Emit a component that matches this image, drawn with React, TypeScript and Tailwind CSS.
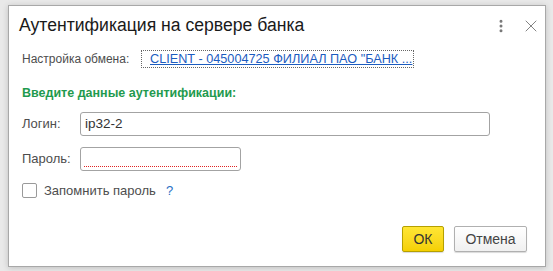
import { MoreVertical, X } from 'lucide-react';

export default function App() {
  return (
    <div className="w-[553px] h-[271px] bg-[#e9e9e9] pt-[5px] pl-[8px] font-['Liberation_Sans',Arial,sans-serif]">
      <div className="w-[538px] h-[262px] bg-white border border-[#a8a8a8] shadow-[0_1px_6px_rgba(0,0,0,0.18)] flex flex-col px-3">
        {/* title bar */}
        <div className="flex items-center h-[38px] pt-[1px]">
          <h1 className="flex-1 text-[17.6px] text-[#1a1a1a] ml-[-2px]">Аутентификация на сервере банка</h1>
          <MoreVertical className="w-4 h-4 text-[#777] mr-[12px] ml-[2px]" strokeWidth={2.5} />
          <X className="w-[20px] h-[20px] text-[#777] mr-[-8px]" strokeWidth={1.1} />
        </div>

        <div className="flex items-center mt-[6px] text-[12px]">
          <span className="text-[#4d4d4d] w-[121px] pl-[1px]">Настройка обмена:</span>
          <a className="text-[#1c5cbf] text-[12.7px] underline outline-1 outline-dotted outline-[#666] pl-[8px] pr-[1px] py-[1px] leading-[14px]">
            CLIENT - 045004725 ФИЛИАЛ ПАО "БАНК ...
          </a>
        </div>

        <div className="mt-[16px] pl-[1px] text-[12.5px] font-bold text-[#1f9a4e]">Введите данные аутентификации:</div>

        <div className="flex items-center mt-[9px] text-[13px]">
          <span className="text-[#4d4d4d] w-[59px] pl-[1px]">Логин:</span>
          <div className="w-[410px] h-[24px] border border-[#a3a3a3] rounded-[3px] flex items-center px-[4px] text-[13.5px] text-[#333]">ip32-2</div>
        </div>

        <div className="flex items-center mt-[11px] text-[13px]">
          <span className="text-[#4d4d4d] w-[59px] pl-[1px]">Пароль:</span>
          <div className="w-[161px] h-[24px] border border-[#a3a3a3] rounded-[3px] px-[3px] pt-[18px]">
            <div className="h-px border-b border-dotted border-[#e02424]" />
          </div>
        </div>

        <div className="flex items-center mt-[10px] text-[13px]">
          <div className="w-[15px] h-[15px] border border-[#9a9a9a] rounded-[2px] ml-[1px]" />
          <span className="ml-[7px] text-[#4d4d4d]">Запомнить пароль</span>
          <span className="ml-[10px] text-[#2a6fc4]">?</span>
        </div>

        <div className="flex-1" />
        <div className="flex justify-end gap-[10px] mb-[14px] mr-[6px]">
          <button className="w-[42px] h-[26px] bg-gradient-to-b from-[#ffe633] to-[#f5d000] border border-[#b5a000] rounded-[2px] text-[14px] text-[#333] shadow-[0_1px_1px_rgba(0,0,0,0.15)]">ОК</button>
          <button className="w-[73px] h-[26px] bg-gradient-to-b from-white to-[#f0f0f0] border border-[#b0b0b0] rounded-[2px] text-[14px] text-[#444] shadow-[0_1px_1px_rgba(0,0,0,0.15)]">Отмена</button>
        </div>
      </div>
    </div>
  );
}
